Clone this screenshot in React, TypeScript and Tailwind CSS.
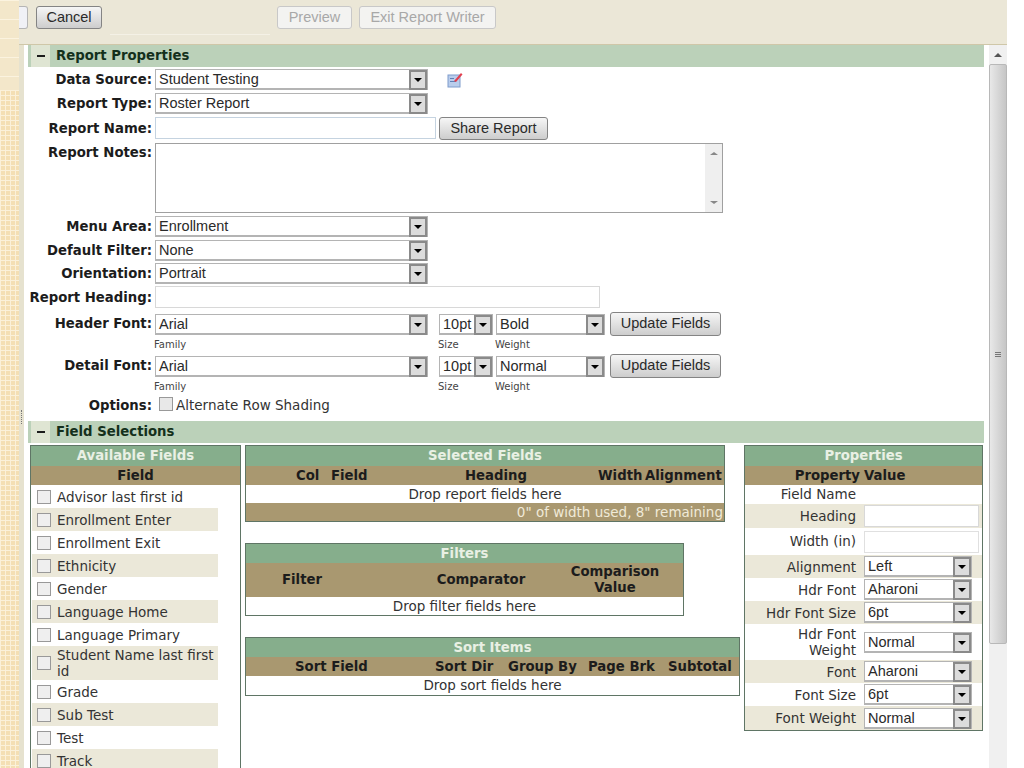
import type { ReactNode } from "react";

const fieldNames = [
  "Advisor last first id",
  "Enrollment Enter",
  "Enrollment Exit",
  "Ethnicity",
  "Gender",
  "Language Home",
  "Language Primary",
  "Student Name last first id",
  "Grade",
  "Sub Test",
  "Test",
  "Track",
];

const propertyRows = [
  { label: "Alignment", value: "Left", h: "h-[23px]", shade: true },
  { label: "Hdr Font", value: "Aharoni", h: "h-[23px]", shade: false },
  { label: "Hdr Font Size", value: "6pt", h: "h-[23px]", shade: true },
  { label: "Hdr Font Weight", value: "Normal", h: "h-[36px]", shade: false },
  { label: "Font", value: "Aharoni", h: "h-[23px]", shade: true },
  { label: "Font Size", value: "6pt", h: "h-[23px]", shade: false },
  { label: "Font Weight", value: "Normal", h: "h-[24px]", shade: true },
];

function Select({ value, className }: { value: string; className: string }) {
  return (
    <div className={`flex h-[21px] items-stretch border border-[#b4b4b4] border-b-2 bg-white font-['Liberation_Sans',sans-serif] text-[14.5px] text-[#2a2a2a] ${className}`}>
      <span className="flex-1 overflow-hidden pl-[3px] leading-[19px]">{value}</span>
      <span className="-mb-[2px] flex w-[18px] items-center justify-center border-2 border-[#8a8a8a] bg-[#dcdcdc]">
        <span className="h-0 w-0 border-x-[4px] border-t-[4px] border-x-transparent border-t-black" />
      </span>
    </div>
  );
}

function Button({ children, className, disabled }: { children: ReactNode; className: string; disabled?: boolean }) {
  return (
    <button
      className={`rounded-[3px] border font-['Liberation_Sans',sans-serif] text-[14.5px] ${
        disabled
          ? "border-[#c8c8c8] bg-[#f3f3f1] text-[#a8a8a8]"
          : "border-[#848484] bg-gradient-to-b from-[#f6f6f6] to-[#cdcdcd] text-[#2a2a2a]"
      } ${className}`}
    >
      {children}
    </button>
  );
}

function Row({ label, className, labelClass, children }: { label: string; className: string; labelClass?: string; children: ReactNode }) {
  return (
    <div className={`flex items-center ${className}`}>
      <label className={`mr-[3px] w-[124px] shrink-0 whitespace-nowrap text-right text-[13.25px] font-bold text-[#1c1c1c] ${labelClass ?? ""}`}>
        {label}
      </label>
      {children}
    </div>
  );
}

function SectionHeader({ title, className }: { title: string; className: string }) {
  return (
    <div className={`flex h-[22px] items-center bg-[#bbd1b9] ${className}`}>
      <div className="ml-[3px] flex h-[22px] w-[19px] items-center justify-center bg-[#dfe5d3]">
        <span className="h-[2px] w-[8px] bg-[#1c1c1c]" />
      </div>
      <span className="ml-[6px] text-[13.25px] font-bold text-[#14301c]">{title}</span>
    </div>
  );
}

function PanelTitle({ title, className }: { title: string; className: string }) {
  return (
    <div className={`flex items-center justify-center bg-[#86ae8c] text-[13.25px] font-bold text-[#e9f0e4] ${className}`}>
      {title}
    </div>
  );
}

function FontRow({ label, weight, className }: { label: string; weight: string; className: string }) {
  return (
    <>
      <Row label={label} className={`h-[22px] ${className}`}>
        <Select value="Arial" className="w-[273px]" />
        <Select value="10pt" className="ml-[11px] w-[54px]" />
        <Select value={weight} className="ml-[3px] w-[109px]" />
        <Button className="ml-[5px] h-[24px] w-[111px]">Update Fields</Button>
      </Row>
      <div className="mt-[3px] flex h-[14px] text-[10px] leading-[14px] text-[#444]">
        <span className="ml-[126px] w-[284px]">Family</span>
        <span className="w-[57px]">Size</span>
        <span>Weight</span>
      </div>
    </>
  );
}

export default function App() {
  return (
    <div className="flex h-[768px] w-[1024px] overflow-hidden bg-white font-['DejaVu_Sans',sans-serif]">
      {/* Left strip */}
      <div className="flex w-[19px] shrink-0 flex-col">
        <div className="h-[90px] bg-[#f3e7ca] bg-[linear-gradient(to_bottom,#fbf3df_1px,transparent_1px)] bg-[size:100%_19px]" />
        <div className="flex-1 bg-[#f4dfb4] bg-[linear-gradient(to_bottom,#fbf1da_1px,transparent_1px),linear-gradient(to_right,#fbf1da_1px,transparent_1px)] bg-[size:5px_5px,5px_5px]" />
      </div>

      <div className="flex w-[988px] shrink-0 flex-col">
        {/* Top buttons */}
        <div className="relative flex h-[45px] shrink-0 items-start border-b border-[#cfc7a8] bg-[#ebe7d7] pt-[6px]">
          <div className="h-[23px] w-[9px] rounded-r-[3px] border-y border-r border-[#b5b5b5] bg-[#f0f1f6]" />
          <Button className="ml-[8px] h-[23px] w-[66px]">Cancel</Button>
          <Button disabled className="ml-[175px] h-[23px] w-[75px]">Preview</Button>
          <Button disabled className="ml-[7px] h-[23px] w-[137px]">Exit Report Writer</Button>
          <span className="absolute left-[91px] top-[34px] h-px w-[160px] bg-[#f4f1e6]" />
        </div>

        <div className="flex min-h-0 flex-1">
          {/* Splitter */}
          <div className="flex w-[5px] shrink-0 flex-col items-center bg-[#e6e2cf] pt-[365px]">
            <span className="h-[14px] w-px border-l border-dotted border-[#777]" />
          </div>

          {/* Content */}
          <div className="w-[960px] shrink-0 overflow-hidden pl-[4px]">
            <SectionHeader title="Report Properties" className="" />
            <Row label="Data Source:" className="mt-[2px] h-[21px]">
              <Select value="Student Testing" className="w-[273px]" />
              <svg viewBox="0 0 16 16" className="ml-[19px] h-[16px] w-[16px]">
                <rect x="1" y="3" width="12" height="12" fill="#b9cdec" stroke="#7f9ccb" />
                <rect x="3" y="6" width="4" height="1" fill="#5f7fb5" />
                <rect x="3" y="9" width="6" height="1" fill="#5f7fb5" />
                <path d="M7 9 L14 1 L15.5 2.5 L9 10 Z" fill="#e2404f" />
              </svg>
            </Row>
            <Row label="Report Type:" className="mt-[3px] h-[21px]">
              <Select value="Roster Report" className="w-[273px]" />
            </Row>
            <Row label="Report Name:" labelClass="pt-[2px]" className="mt-[3px] h-[22px]">
              <input className="h-[22px] w-[281px] border border-[#c5d3e0] bg-white" />
              <Button className="ml-[3px] h-[23px] w-[109px]">Share Report</Button>
            </Row>
            <div className="mt-[4px] flex h-[70px]">
              <label className="mr-[3px] w-[124px] shrink-0 text-right text-[13.25px] font-bold text-[#1c1c1c]">
                Report Notes:
              </label>
              <div className="flex w-[568px] justify-end border border-[#a0a0a0] bg-white">
                <div className="flex w-[17px] flex-col items-center justify-between bg-[#efefef] py-[8px]">
                  <span className="h-0 w-0 border-x-[4px] border-b-[3px] border-x-transparent border-b-[#888]" />
                  <span className="h-0 w-0 border-x-[4px] border-t-[3px] border-x-transparent border-t-[#888]" />
                </div>
              </div>
            </div>
            <Row label="Menu Area:" className="mt-[3px] h-[21px]">
              <Select value="Enrollment" className="w-[273px]" />
            </Row>
            <Row label="Default Filter:" className="mt-[3px] h-[21px]">
              <Select value="None" className="w-[273px]" />
            </Row>
            <Row label="Orientation:" className="mt-[2px] h-[21px]">
              <Select value="Portrait" className="w-[273px]" />
            </Row>
            <Row label="Report Heading:" labelClass="pt-[2px]" className="mt-[2px] h-[22px]">
              <input className="h-[22px] w-[445px] border border-[#d8d8d8] bg-white" />
            </Row>
            <FontRow label="Header Font:" weight="Bold" className="mt-[5px]" />
            <FontRow label="Detail Font:" weight="Normal" className="mt-[3px]" />
            <Row label="Options:" className="mt-[3px] h-[17px]">
              <span className="mb-[3px] ml-[4px] h-[14px] w-[14px] border border-[#999] bg-[#e8e8e8]" />
              <span className="ml-[3px] text-[13.5px] text-[#333]">Alternate Row Shading</span>
            </Row>

            <SectionHeader title="Field Selections" className="mt-[7px]" />

            <div className="mt-[2px] flex items-start pl-[2px]">
              {/* Available fields */}
              <div className="h-[340px] w-[211px] shrink-0 border border-[#5f7565]">
                <PanelTitle title="Available Fields" className="h-[20px]" />
                <div className="flex h-[19px] items-center justify-center bg-[#a99870] text-[13.25px] font-bold text-[#1c1c1c]">
                  Field
                </div>
                {fieldNames.map((name, i) => (
                  <div
                    key={name}
                    className={`ml-[1px] flex w-[186px] items-center pl-[5px] text-[13.5px] leading-[16px] text-[#333] ${
                      name.startsWith("Student") ? "h-[34px]" : "h-[23px]"
                    } ${i % 2 === 1 ? "bg-[#ebe8d9]" : "bg-white"}`}
                  >
                    <span className="mr-[6px] h-[14px] w-[14px] shrink-0 border border-[#999] bg-[#efefef]" />
                    <span>{name}</span>
                  </div>
                ))}
              </div>

              <div className="ml-[4px] flex shrink-0 flex-col items-start">
                {/* Selected fields */}
                <div className="w-[480px] border border-[#5f7565]">
                  <PanelTitle title="Selected Fields" className="h-[20px]" />
                  <div className="grid h-[19px] grid-cols-[35px_134px_133px_47px_1fr] items-center bg-[#a99870] pl-[50px] text-[13.25px] font-bold text-[#1c1c1c]">
                    <span>Col</span>
                    <span>Field</span>
                    <span>Heading</span>
                    <span>Width</span>
                    <span>Alignment</span>
                  </div>
                  <div className="flex h-[18px] items-center justify-center bg-white text-[13.5px] text-[#333]">
                    Drop report fields here
                  </div>
                  <div className="flex h-[18px] items-center justify-end whitespace-nowrap bg-[#a99870] pr-[1px] text-[13.5px] text-[#f0ead8]">
                    0" of width used, 8" remaining
                  </div>
                </div>

                {/* Filters */}
                <div className="mt-[21px] w-[439px] border border-[#5f7565]">
                  <PanelTitle title="Filters" className="h-[19px]" />
                  <div className="grid h-[34px] grid-cols-[112px_39px_168px_100px] items-center bg-[#a99870] text-center text-[13.25px] font-bold leading-[16px] text-[#1c1c1c]">
                    <span>Filter</span>
                    <span />
                    <span>Comparator</span>
                    <span>Comparison Value</span>
                  </div>
                  <div className="flex h-[18px] items-center justify-center bg-white text-[13.5px] text-[#333]">
                    Drop filter fields here
                  </div>
                </div>

                {/* Sort items */}
                <div className="mt-[21px] w-[495px] border border-[#5f7565]">
                  <PanelTitle title="Sort Items" className="h-[19px]" />
                  <div className="grid h-[19px] grid-cols-[140px_73px_80px_80px_1fr] items-center bg-[#a99870] pl-[49px] text-[13.25px] font-bold text-[#1c1c1c]">
                    <span>Sort Field</span>
                    <span>Sort Dir</span>
                    <span>Group By</span>
                    <span>Page Brk</span>
                    <span>Subtotal</span>
                  </div>
                  <div className="flex h-[19px] items-center justify-center bg-white text-[13.5px] text-[#333]">
                    Drop sort fields here
                  </div>
                </div>
              </div>

              {/* Properties */}
              <div className="ml-[4px] w-[239px] shrink-0 border border-[#5f7565]">
                <PanelTitle title="Properties" className="h-[20px]" />
                <div className="flex h-[19px] items-center bg-[#a99870] text-[13.25px] font-bold text-[#1c1c1c]">
                  <span className="w-[115px] text-right">Property</span>
                  <span className="ml-[4px]">Value</span>
                </div>
                <div className="flex h-[19px] items-center bg-white text-[13.5px] text-[#333]">
                  <span className="w-[111px] text-right">Field Name</span>
                </div>
                <div className="flex h-[24px] items-center bg-[#ebe8d9] text-[13.5px] text-[#333]">
                  <span className="w-[111px] text-right">Heading</span>
                  <input className="ml-[8px] h-[22px] w-[115px] border border-[#d8d8d8] bg-white" />
                </div>
                <div className="flex h-[27px] items-center bg-white text-[13.5px] text-[#333]">
                  <span className="w-[111px] text-right">Width (in)</span>
                  <input className="ml-[8px] h-[22px] w-[115px] border border-[#e0e0e0] bg-white" />
                </div>
                {propertyRows.map((row) => (
                  <div
                    key={row.label}
                    className={`flex items-center text-[13.5px] leading-[16px] text-[#333] ${row.h} ${row.shade ? "bg-[#ebe8d9]" : "bg-white"}`}
                  >
                    <span className="ml-[11px] w-[100px] text-right">{row.label}</span>
                    <Select value={row.value} className="ml-[8px] w-[108px]" />
                  </div>
                ))}
              </div>
            </div>
          </div>

          {/* Page scrollbar */}
          <div className="ml-[5px] flex w-[18px] shrink-0 flex-col bg-[#f0f0f0]">
            <div className="flex h-[19px] items-center justify-center">
              <span className="h-0 w-0 border-x-[4px] border-b-[4px] border-x-transparent border-b-[#555]" />
            </div>
            <div className="flex h-[580px] flex-col items-center justify-center gap-px rounded-[2px] border border-[#b8b8b8] bg-gradient-to-r from-[#e8e8e8] to-[#c6c6c6]">
              <span className="h-px w-[6px] bg-[#777]" />
              <span className="h-px w-[6px] bg-[#777]" />
              <span className="h-px w-[6px] bg-[#777]" />
            </div>
          </div>
        </div>
      </div>
    </div>
  );
}
